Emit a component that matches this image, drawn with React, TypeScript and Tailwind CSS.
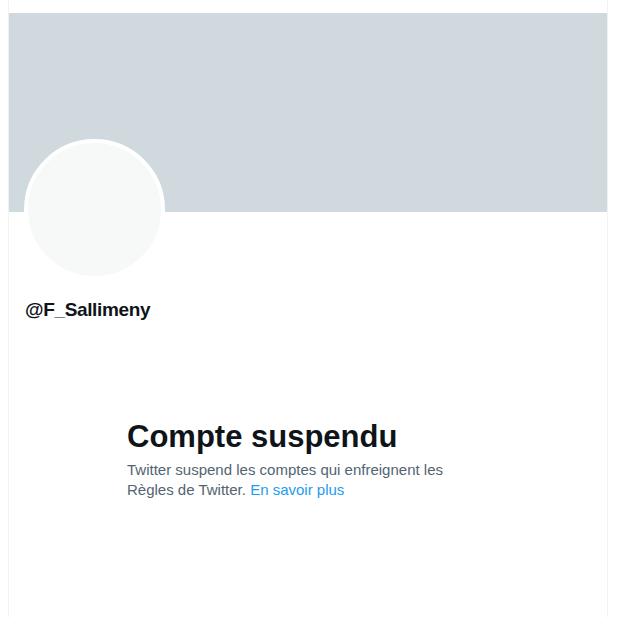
export default function App() {
  return (
    <div
      className="h-[617px] w-[624px] overflow-hidden bg-white"
      style={{ fontFamily: '"Liberation Sans", Arial, sans-serif' }}
    >
      <div className="ml-[8px] flex h-full w-[600px] flex-col border-x border-[#eff3f4]">
        {/* top of the page, header cropped off */}
        <div className="h-[13px] shrink-0" />

        {/* banner */}
        <div className="h-[199px] shrink-0 bg-[#cfd9de]" />

        {/* avatar */}
        <div className="pl-[15px]">
          <div className="-mt-[73px] h-[141px] w-[141px] rounded-full border-4 border-white bg-[#f7f9f9]" />
        </div>

        {/* handle */}
        <div className="mt-[18px] pl-4">
          <span className="text-[19px] leading-[24px] font-extrabold tracking-[-0.35px] text-[#0f1419]">
            @F_Sallimeny
          </span>
        </div>

        {/* suspended message */}
        <div className="mt-[96px] pl-[118px]">
          <div className="max-w-[336px]">
            <h2 className="text-[31px] leading-[36px] font-extrabold text-[#0f1419]">
              Compte suspendu
            </h2>
            <p className="mt-[5px] text-[15px] leading-[20px] text-[#536471]">
              Twitter suspend les comptes qui enfreignent les Règles de Twitter.{' '}
              <a href="#" className="text-[#1d9bf0]">
                En savoir plus
              </a>
            </p>
          </div>
        </div>
      </div>
    </div>
  );
}
